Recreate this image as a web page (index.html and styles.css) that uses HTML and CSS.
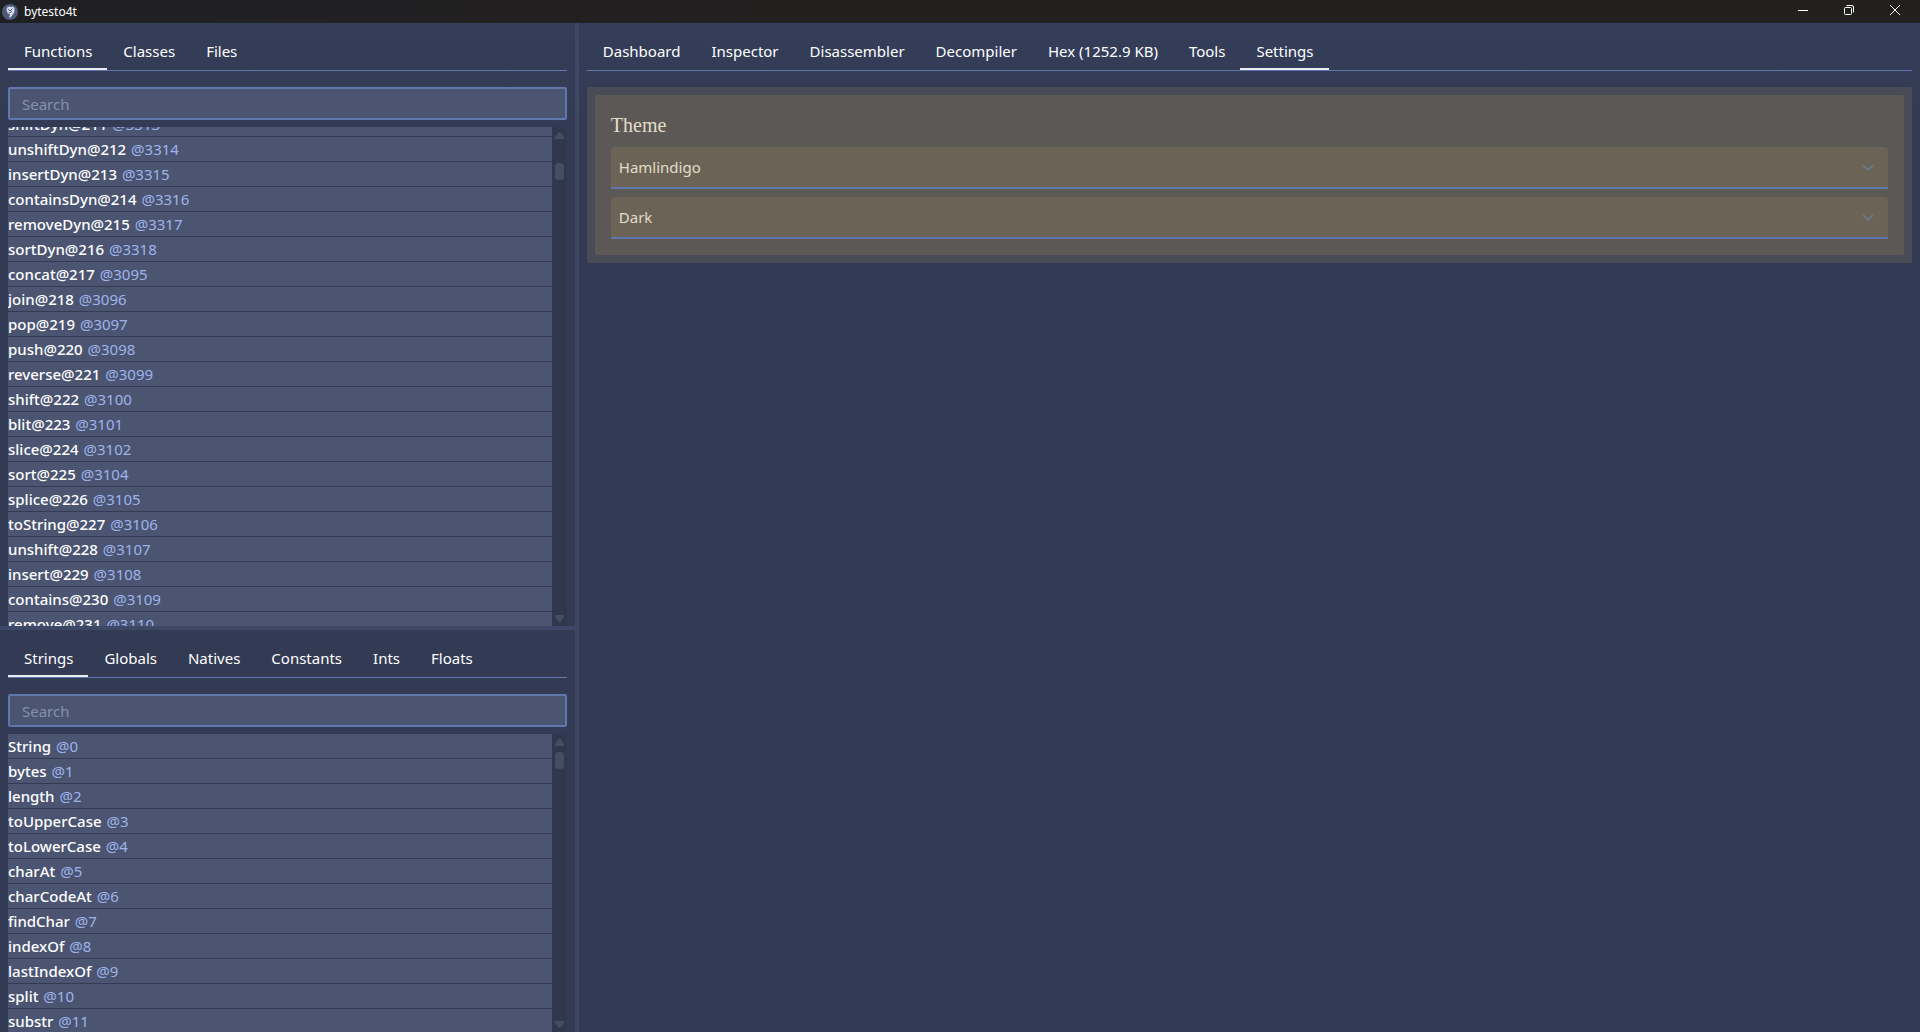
FILE: index.html
```html
<!DOCTYPE html>
<html lang="en">
<head>
<meta charset="utf-8">
<title>bytesto4t</title>
<link rel="stylesheet" href="styles.css">
</head>
<body>
<header class="titlebar">
  <svg class="logo" viewBox="0 0 16 16" aria-hidden="true">
    <circle cx="8" cy="8" r="8" fill="#4c5a78"/>
    <path d="M5 3.500 7.500 2.500 9 3 11 2.500 12.500 4 12.500 8 10.500 11 8.500 13.500 7 13.500 8 10.500 5.500 9 4.500 6z" fill="#d5dbe8"/>
    <path d="M6 5 8 7 10.500 4.500M7 9 10 7.500" stroke="#55617d" fill="none"/>
  </svg>
  <span class="app-name">bytesto4t</span>
  <div class="window-buttons">
    <button type="button" aria-label="Minimize"><svg viewBox="0 0 12 12"><path d="M1 6.500h10"/></svg></button>
    <button type="button" aria-label="Restore"><svg viewBox="0 0 12 12"><rect x="1.500" y="3.500" width="7" height="7" rx="1"/><path d="M3.500 1.500h5.500a1.500 1.500 0 0 1 1.500 1.500v5.500"/></svg></button>
    <button type="button" aria-label="Close"><svg viewBox="0 0 12 12"><path d="M1 1l10 10M11 1l-10 10"/></svg></button>
  </div>
</header>
<div class="workspace">
  <aside class="sidebar">
    <section class="panel">
      <nav class="tabs">
        <button type="button" class="tab active">Functions</button>
        <button type="button" class="tab">Classes</button>
        <button type="button" class="tab">Files</button>
      </nav>
      <input class="search" type="search" placeholder="Search" aria-label="Search functions">
      <div class="list-frame">
        <ul class="list scrolled">
          <li>shiftDyn@211 <span>@3313</span></li>
          <li>unshiftDyn@212 <span>@3314</span></li>
          <li>insertDyn@213 <span>@3315</span></li>
          <li>containsDyn@214 <span>@3316</span></li>
          <li>removeDyn@215 <span>@3317</span></li>
          <li>sortDyn@216 <span>@3318</span></li>
          <li>concat@217 <span>@3095</span></li>
          <li>join@218 <span>@3096</span></li>
          <li>pop@219 <span>@3097</span></li>
          <li>push@220 <span>@3098</span></li>
          <li>reverse@221 <span>@3099</span></li>
          <li>shift@222 <span>@3100</span></li>
          <li>blit@223 <span>@3101</span></li>
          <li>slice@224 <span>@3102</span></li>
          <li>sort@225 <span>@3104</span></li>
          <li>splice@226 <span>@3105</span></li>
          <li>toString@227 <span>@3106</span></li>
          <li>unshift@228 <span>@3107</span></li>
          <li>insert@229 <span>@3108</span></li>
          <li>contains@230 <span>@3109</span></li>
          <li>remove@231 <span>@3110</span></li>
        </ul>
        <div class="scrollbar" aria-hidden="true">
          <svg viewBox="0 0 9 7"><path d="M3.500 0H5.500L9 5.500V7H0V5.500z"/></svg>
          <div class="track offset"><div class="thumb"></div></div>
          <svg viewBox="0 0 9 7"><path d="M0 0H9V1.500L5.500 7H3.500L0 1.500z"/></svg>
        </div>
      </div>
    </section>
    <div class="split"></div>
    <section class="panel">
      <nav class="tabs">
        <button type="button" class="tab active">Strings</button>
        <button type="button" class="tab">Globals</button>
        <button type="button" class="tab">Natives</button>
        <button type="button" class="tab">Constants</button>
        <button type="button" class="tab">Ints</button>
        <button type="button" class="tab">Floats</button>
      </nav>
      <input class="search" type="search" placeholder="Search" aria-label="Search strings">
      <div class="list-frame">
        <ul class="list">
          <li>String <span>@0</span></li>
          <li>bytes <span>@1</span></li>
          <li>length <span>@2</span></li>
          <li>toUpperCase <span>@3</span></li>
          <li>toLowerCase <span>@4</span></li>
          <li>charAt <span>@5</span></li>
          <li>charCodeAt <span>@6</span></li>
          <li>findChar <span>@7</span></li>
          <li>indexOf <span>@8</span></li>
          <li>lastIndexOf <span>@9</span></li>
          <li>split <span>@10</span></li>
          <li>substr <span>@11</span></li>
        </ul>
        <div class="scrollbar" aria-hidden="true">
          <svg viewBox="0 0 9 7"><path d="M3.500 0H5.500L9 5.500V7H0V5.500z"/></svg>
          <div class="track"><div class="thumb"></div></div>
          <svg viewBox="0 0 9 7"><path d="M0 0H9V1.500L5.500 7H3.500L0 1.500z"/></svg>
        </div>
      </div>
    </section>
  </aside>
  <div class="split"></div>
  <main class="panel">
    <nav class="tabs">
      <button type="button" class="tab">Dashboard</button>
      <button type="button" class="tab">Inspector</button>
      <button type="button" class="tab">Disassembler</button>
      <button type="button" class="tab">Decompiler</button>
      <button type="button" class="tab">Hex (1252.9 KB)</button>
      <button type="button" class="tab">Tools</button>
      <button type="button" class="tab active">Settings</button>
    </nav>
    <div class="card">
      <section class="card-body">
        <h2>Theme</h2>
        <div class="field">
          <select aria-label="Theme name"><option>Hamlindigo</option></select>
          <svg viewBox="0 0 12 8"><path d="M1 1l5 5 5-5"/></svg>
        </div>
        <div class="field">
          <select aria-label="Theme mode"><option>Dark</option><option>Light</option></select>
          <svg viewBox="0 0 12 8"><path d="M1 1l5 5 5-5"/></svg>
        </div>
      </section>
    </div>
  </main>
</div>
</body>
</html>
```
FILE: styles.css
```css
* { box-sizing: border-box; }

body {
  margin: 0;
  height: 100vh;
  display: flex;
  flex-direction: column;
  overflow: hidden;
  background: #333a54;
  color: #fff;
  font: 15px/24px "Segoe UI", "Noto Sans", sans-serif;
}

button, input, select { font: inherit; color: inherit; }

.titlebar {
  flex: none;
  height: 23px;
  display: flex;
  align-items: center;
  gap: 6px;
  padding: 0 2px;
  background: linear-gradient(90deg, #202024, #221f1f 40%);
  font-size: 12px;
}
.logo { width: 16px; height: 16px; }
.window-buttons { align-self: flex-start; margin-left: auto; display: flex; }
.window-buttons button {
  width: 46px;
  height: 20px;
  padding: 0;
  border: 0;
  background: none;
  display: grid;
  place-items: center;
}
.window-buttons svg { width: 12px; height: 12px; fill: none; stroke: #fff; }

.workspace {
  flex: 1;
  min-height: 0;
  display: grid;
  grid-template-columns: minmax(0, 3fr) 4px minmax(0, 7fr);
  background: linear-gradient(#343e58, #333a54 100px);
}
.sidebar {
  min-height: 0;
  display: grid;
  grid-template-rows: minmax(0, 3fr) 4px minmax(0, 2fr);
}
.split { background: #3d4866; }

.panel {
  min-height: 0;
  display: flex;
  flex-direction: column;
  padding: 8px 8px 0;
}

.tabs {
  flex: none;
  display: flex;
  border-bottom: 1px solid #5f77ad;
  margin-bottom: 16px;
}
.tab {
  height: 39px;
  padding: 2px 15px 0 16px;
  border: 0;
  border-bottom: 2px solid transparent;
  background: none;
  white-space: nowrap;
}
.tab.active { border-color: #eceef5; }

.search {
  flex: none;
  height: 33px;
  width: 100%;
  padding: 0 12px;
  border: 2px solid #5f77ad;
  border-radius: 2px;
  background: #4b5572;
  outline: 0;
  appearance: none;
}
.search::placeholder { color: #8390b0; opacity: 1; }

.list-frame {
  flex: 1;
  min-height: 0;
  margin-top: 7px;
  display: flex;
  overflow: hidden;
}
.list { flex: 1; margin: 0; padding: 0; list-style: none; font-weight: 500; }
.list.scrolled { margin-top: -15px; }
.list li {
  height: 25px;
  border-bottom: 1px solid #333a54;
  background: #4b5572;
  white-space: nowrap;
}
.list span { margin-left: 1px; color: #9fb3ea; font-weight: 400; }

.scrollbar {
  width: 15px;
  display: flex;
  flex-direction: column;
  align-items: center;
  padding: 5px 0 4px;
  background: #31384e;
}
.scrollbar svg { width: 9px; height: 7px; fill: #454d63; }
.track { flex: 1; padding-top: 6px; }
.track.offset { padding-top: 24px; }
.thumb { width: 9px; height: 17px; border-radius: 4px; background: #454d63; }

.card { padding: 8px; border-radius: 2px; background: #494c55; }
.card-body {
  display: flex;
  flex-direction: column;
  gap: 8px;
  padding: 16px;
  border-radius: 2px;
  background: #5c5855;
  color: #e3dccb;
}
.card-body h2 {
  margin: 0;
  font: 400 20px/28px "Liberation Serif", serif;
}
.field { display: grid; align-items: center; }
.field select, .field svg { grid-area: 1 / 1; }
.field select {
  width: 100%;
  height: 42px;
  padding: 0 32px 0 8px;
  border: 0;
  border-bottom: 2px solid #5f77ad;
  border-radius: 4px 4px 0 0;
  background: #6b6456;
  appearance: none;
}
.field svg {
  justify-self: end;
  width: 12px;
  height: 8px;
  margin-right: 14px;
  fill: none;
  stroke: #6b7686;
  stroke-width: 2;
  pointer-events: none;
}
```
